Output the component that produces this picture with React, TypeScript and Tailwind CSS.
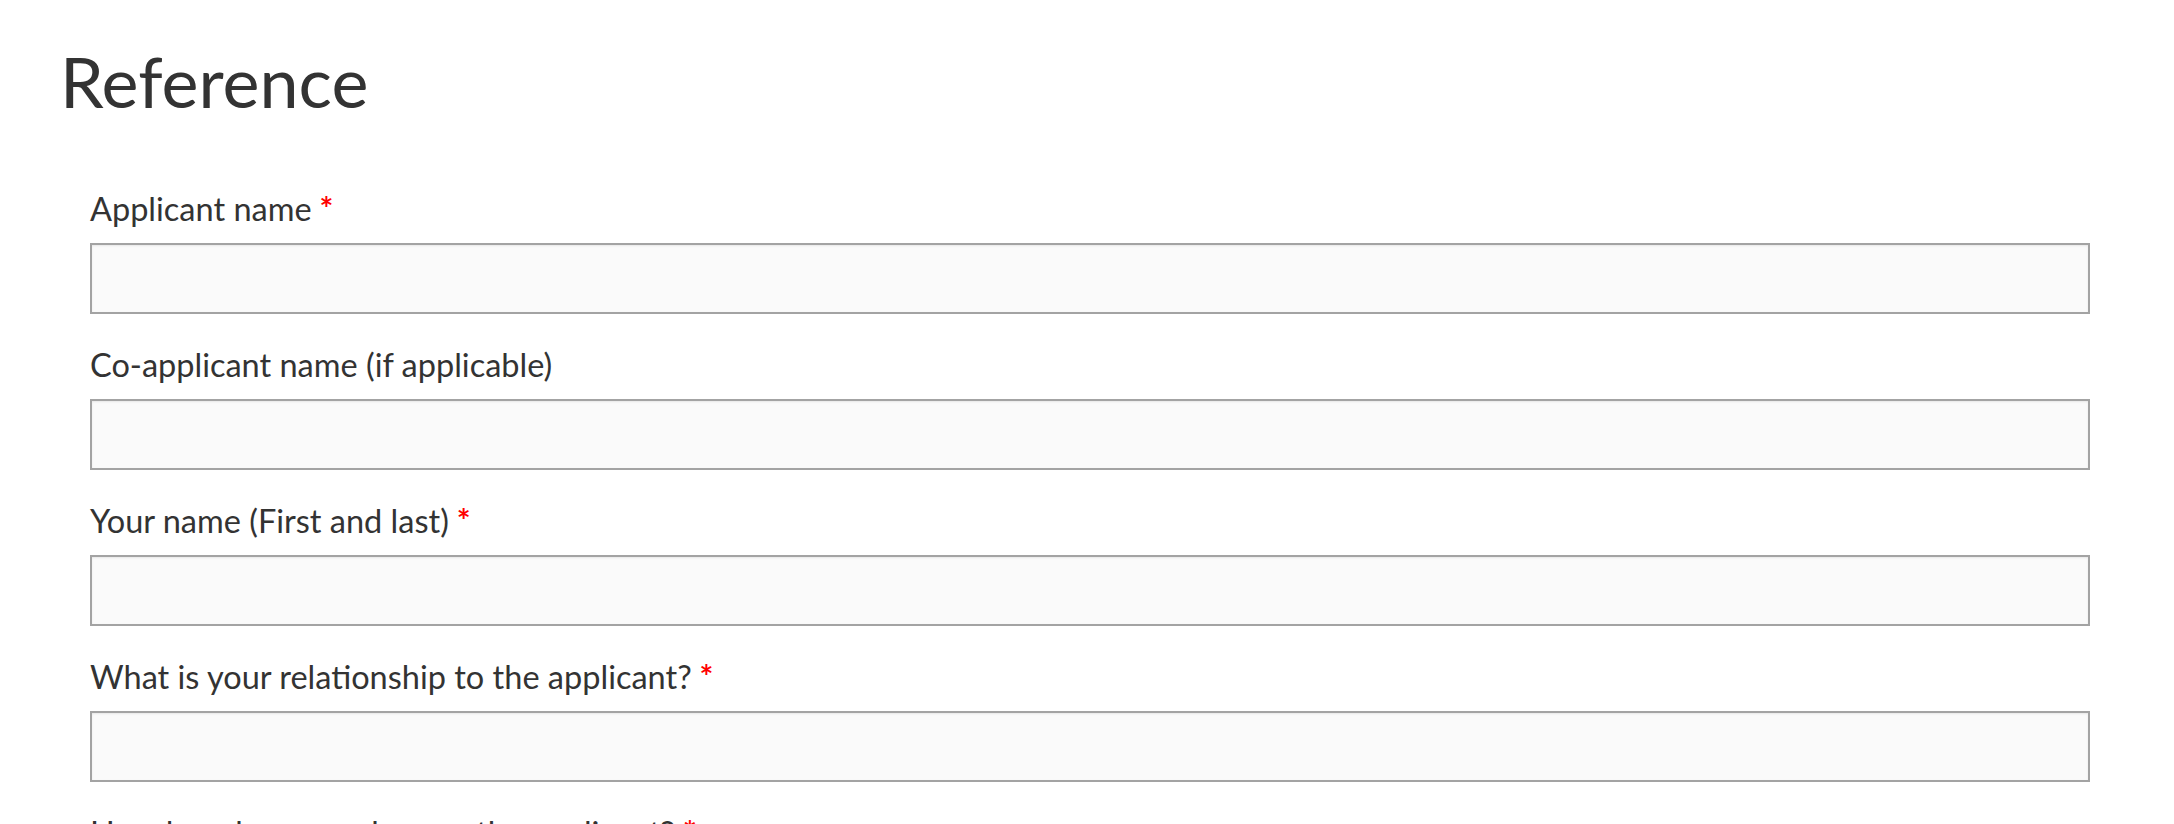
import React from 'react'

// Form fields shown in the reference, in order
interface Field {
  id: string
  label: string
  required: boolean
}

const fields: Field[] = [
  { id: 'applicant', label: 'Applicant name', required: true },
  { id: 'coApplicant', label: 'Co-applicant name (if applicable)', required: false },
  { id: 'yourName', label: 'Your name (First and last)', required: true },
  { id: 'relationship', label: 'What is your relationship to the applicant?', required: true },
  { id: 'knownFor', label: 'How long have you known the applicant?', required: true },
]

/**
 * Single labelled text input
 */
function FormField({ field }: { field: Field }) {
  return (
    <div className="mb-[32px]">
      <label htmlFor={field.id} className="block text-[32.5px] leading-[37px] text-[#333333] mb-[16px]">
        {field.label}
        {field.required && <span className="text-[#ff0000] font-bold"> *</span>}
      </label>
      <input
        id={field.id}
        type="text"
        className="block w-full h-[71px] border-2 border-[#a3a3a3] bg-[#fafafa] shadow-[inset_0_1px_2px_rgba(0,0,0,0.08)] px-4 text-[30.8px] text-[#333333] outline-none"
      />
    </div>
  )
}

export default function App() {
  return (
    <div className="min-h-screen bg-white font-['Lato','Liberation_Sans',sans-serif] pt-[39px] pl-[60px]">
      <h1 className="text-[70px] leading-[84px] font-normal text-[#333333]">Reference</h1>
      <form className="mt-[67px] ml-[30px] w-[2000px]">
        {fields.map((field) => (
          <FormField key={field.id} field={field} />
        ))}
      </form>
    </div>
  )
}
